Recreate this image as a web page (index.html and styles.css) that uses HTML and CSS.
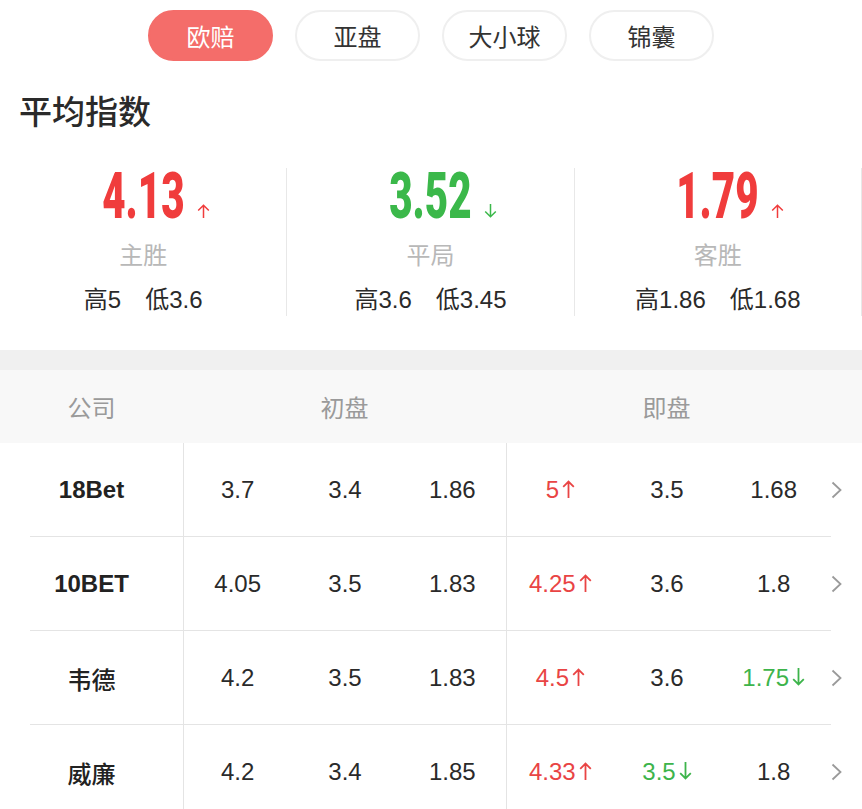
FILE: index.html
```html
<!DOCTYPE html>
<html lang="zh-CN">
<head>
<meta charset="utf-8">
<title>欧赔</title>
<link rel="stylesheet" href="styles.css">
</head>
<body>
<div class="tabs">
  <div class="tab active">欧赔</div>
  <div class="tab">亚盘</div>
  <div class="tab">大小球</div>
  <div class="tab">锦囊</div>
</div>

<h1 class="title">平均指数</h1>

<div class="stats">
  <div class="stat">
    <div class="big-wrap red">
      <span class="big">4.13</span>
      <svg class="big-arrow" width="13" height="14" viewBox="0 0 13 14"><path d="M6.5 14V1.2M1.2 6.5L6.5 1.2L11.8 6.5" fill="none" stroke="currentColor" stroke-width="1.5"/></svg>
    </div>
    <div class="stat-label">主胜</div>
    <div class="stat-range"><span>高5</span><span>低3.6</span></div>
  </div>
  <div class="stat">
    <div class="big-wrap green">
      <span class="big">3.52</span>
      <svg class="big-arrow" width="13" height="14" viewBox="0 0 13 14"><path d="M6.5 0V12.8M1.2 7.5L6.5 12.8L11.8 7.5" fill="none" stroke="currentColor" stroke-width="1.5"/></svg>
    </div>
    <div class="stat-label">平局</div>
    <div class="stat-range"><span>高3.6</span><span>低3.45</span></div>
  </div>
  <div class="stat">
    <div class="big-wrap red">
      <span class="big">1.79</span>
      <svg class="big-arrow" width="13" height="14" viewBox="0 0 13 14"><path d="M6.5 14V1.2M1.2 6.5L6.5 1.2L11.8 6.5" fill="none" stroke="currentColor" stroke-width="1.5"/></svg>
    </div>
    <div class="stat-label">客胜</div>
    <div class="stat-range"><span>高1.86</span><span>低1.68</span></div>
  </div>
</div>

<div class="band"></div>

<div class="thead">
  <div class="th">公司</div>
  <div class="th">初盘</div>
  <div class="th">即盘</div>
  <div></div>
</div>

<div class="row">
  <div class="company">18Bet</div>
  <div class="group"><span>3.7</span><span>3.4</span><span>1.86</span></div>
  <div class="group">
    <span><span class="up">5<svg class="arr" width="13" height="18" viewBox="0 0 13 18"><path d="M6.5 18V1.6M1.2 6.9L6.5 1.6L11.8 6.9" fill="none" stroke="currentColor" stroke-width="1.8"/></svg></span></span>
    <span>3.5</span><span>1.68</span>
  </div>
  <div class="more"><svg width="11" height="18" viewBox="0 0 11 18"><polyline points="1.5,1.5 9.5,9 1.5,16.5" fill="none" stroke="#9a9a9a" stroke-width="1.8"/></svg></div>
</div>
<div class="row">
  <div class="company">10BET</div>
  <div class="group"><span>4.05</span><span>3.5</span><span>1.83</span></div>
  <div class="group">
    <span><span class="up">4.25<svg class="arr" width="13" height="18" viewBox="0 0 13 18"><path d="M6.5 18V1.6M1.2 6.9L6.5 1.6L11.8 6.9" fill="none" stroke="currentColor" stroke-width="1.8"/></svg></span></span>
    <span>3.6</span><span>1.8</span>
  </div>
  <div class="more"><svg width="11" height="18" viewBox="0 0 11 18"><polyline points="1.5,1.5 9.5,9 1.5,16.5" fill="none" stroke="#9a9a9a" stroke-width="1.8"/></svg></div>
</div>
<div class="row">
  <div class="company cjk">韦德</div>
  <div class="group"><span>4.2</span><span>3.5</span><span>1.83</span></div>
  <div class="group">
    <span><span class="up">4.5<svg class="arr" width="13" height="18" viewBox="0 0 13 18"><path d="M6.5 18V1.6M1.2 6.9L6.5 1.6L11.8 6.9" fill="none" stroke="currentColor" stroke-width="1.8"/></svg></span></span>
    <span>3.6</span>
    <span><span class="down">1.75<svg class="arr" width="13" height="18" viewBox="0 0 13 18"><path d="M6.5 0V16.4M1.2 11.1L6.5 16.4L11.8 11.1" fill="none" stroke="currentColor" stroke-width="1.8"/></svg></span></span>
  </div>
  <div class="more"><svg width="11" height="18" viewBox="0 0 11 18"><polyline points="1.5,1.5 9.5,9 1.5,16.5" fill="none" stroke="#9a9a9a" stroke-width="1.8"/></svg></div>
</div>
<div class="row">
  <div class="company cjk">威廉</div>
  <div class="group"><span>4.2</span><span>3.4</span><span>1.85</span></div>
  <div class="group">
    <span><span class="up">4.33<svg class="arr" width="13" height="18" viewBox="0 0 13 18"><path d="M6.5 18V1.6M1.2 6.9L6.5 1.6L11.8 6.9" fill="none" stroke="currentColor" stroke-width="1.8"/></svg></span></span>
    <span><span class="down">3.5<svg class="arr" width="13" height="18" viewBox="0 0 13 18"><path d="M6.5 0V16.4M1.2 11.1L6.5 16.4L11.8 11.1" fill="none" stroke="currentColor" stroke-width="1.8"/></svg></span></span>
    <span>1.8</span>
  </div>
  <div class="more"><svg width="11" height="18" viewBox="0 0 11 18"><polyline points="1.5,1.5 9.5,9 1.5,16.5" fill="none" stroke="#9a9a9a" stroke-width="1.8"/></svg></div>
</div>
</body>
</html>
```

FILE: styles.css
```css
body {
  margin: 0;
  background: #fff;
  color: #333;
  font-family: "Liberation Sans", "Noto Sans CJK SC", sans-serif;
}

.tabs {
  display: flex;
  justify-content: center;
  gap: 22px;
  padding-top: 10px;
}

.tab {
  box-sizing: border-box;
  width: 125px;
  height: 51px;
  border: 2px solid #efefef;
  border-radius: 26px;
  display: flex;
  align-items: center;
  justify-content: center;
  font-family: "Noto Sans CJK SC", sans-serif;
  font-size: 24px;
  color: #333;
}

.tab.active {
  background: #f46d6a;
  border-color: #f46d6a;
  color: #fff;
}

.title {
  margin: 33px 0 0 19px;
  font-family: "Noto Sans CJK SC", sans-serif;
  font-size: 33px;
  line-height: 33px;
  font-weight: 500;
  color: #2a2a2a;
}

.stats {
  display: grid;
  grid-template-columns: repeat(3, 1fr);
  margin-top: 41px;
}

.stat {
  border-right: 1px solid #e8e8e8;
  display: flex;
  flex-direction: column;
  align-items: center;
  padding: 3px 0 1px;
}

.big-wrap {
  position: relative;
  display: inline-block;
  height: 50px;
}

.big {
  display: inline-block;
  font-family: Roboto, sans-serif;
  font-weight: 900;
  font-size: 65px;
  line-height: 50px;
  transform: scaleX(0.62);
  margin: 0 -24px;
}

.big-arrow {
  position: absolute;
  left: calc(100% + 11px);
  bottom: 3px;
}

.red { color: #f03c3c; }
.green { color: #3bb84a; }

.stat-label {
  margin-top: 18px;
  font-family: "Noto Sans CJK SC", sans-serif;
  font-size: 24px;
  line-height: 30px;
  color: #b8b8b8;
}

.stat-range {
  margin-top: 16px;
  display: flex;
  gap: 24px;
  font-size: 24px;
  line-height: 30px;
  color: #2a2a2a;
}

.band {
  margin-top: 34px;
  height: 20px;
  background: #f0f0f0;
}

.thead {
  display: grid;
  grid-template-columns: 183px 323px 321px 35px;
  height: 73px;
  background: #f8f8f8;
}

.th {
  display: flex;
  align-items: center;
  justify-content: center;
  font-family: "Noto Sans CJK SC", sans-serif;
  font-size: 24px;
  color: #9a9a9a;
}

.row {
  display: grid;
  grid-template-columns: 183px 323px 321px 35px;
  height: 94px;
  background: linear-gradient(#e4e4e4, #e4e4e4) 30px 100% / 801px 1px no-repeat;
}

.company {
  display: flex;
  align-items: center;
  justify-content: center;
  font-size: 24px;
  font-weight: 700;
  color: #222;
}

.company.cjk {
  font-family: "Noto Sans CJK SC", sans-serif;
  font-weight: 500;
}

.group {
  border-left: 1px solid #e4e4e4;
  display: grid;
  grid-template-columns: repeat(3, 1fr);
}

.group > span {
  display: flex;
  align-items: center;
  justify-content: center;
  font-size: 24px;
  color: #2a2a2a;
}

.group .up { color: #e94444; }
.group .down { color: #3db44b; }

.arr {
  margin-left: 3px;
  vertical-align: baseline;
}

.more {
  display: flex;
  align-items: center;
  padding-left: 4px;
}
```
